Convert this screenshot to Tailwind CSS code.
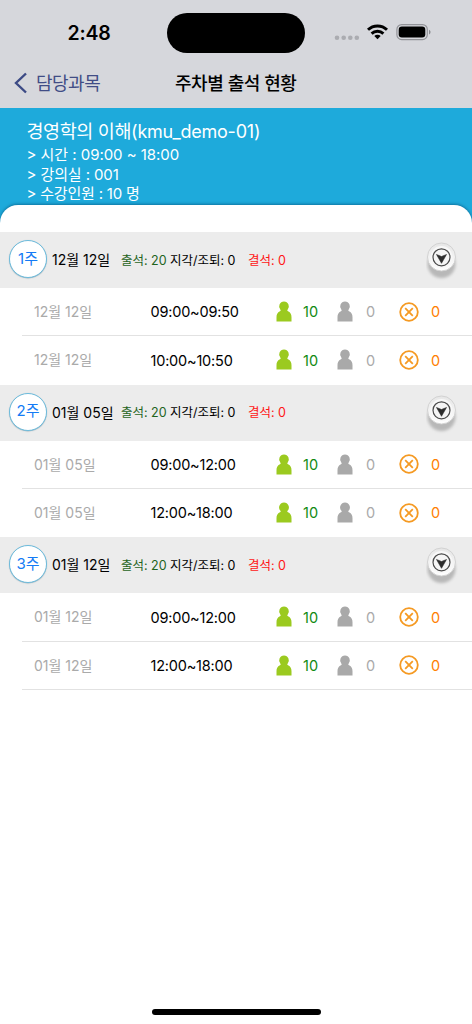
<!DOCTYPE html>
<html lang="ko">
<head>
<meta charset="utf-8">
<title>주차별 출석 현황</title>
<script src="https://cdn.jsdelivr.net/npm/@tailwindcss/browser@4"></script>
</head>
<body class="bg-white">
<svg class="hidden">
  <symbol id="person" viewBox="0 0 16 21"><path d="M8 .5a4.900 4.900 0 0 1 3.600 8.200c-.5.6-.4 1.200.5 1.600 2.500 1 3.400 3.400 3.400 6v4.200H.5v-4.200c0-2.600.9-5 3.400-6 .9-.4 1-1 .5-1.600A4.900 4.900 0 0 1 8 .5z" fill="currentColor"/></symbol>
  <symbol id="cross" viewBox="0 0 20 20"><g fill="none" stroke="currentColor" stroke-width="1.800"><circle cx="10" cy="10" r="8.800"/><path d="M6.200 6.200l7.600 7.600M13.800 6.200l-7.600 7.600"/></g></symbol>
</svg>
<div class="relative flex h-[1024px] w-[472px] flex-col overflow-hidden bg-white font-['Inter','Noto_Sans_CJK_KR',sans-serif] text-black whitespace-nowrap">
  <header class="h-[107.500px] shrink-0 bg-[#d6d7dc]">
    <div class="flex h-[53px] items-start pt-[12.500px]">
      <div class="w-[167px] pl-[67.500px] pt-[5px] text-[19.500px] leading-[30px] font-semibold tracking-[-0.200px]">2:48</div>
      <div class="h-[40.500px] w-[138px] rounded-full bg-black"></div>
      <svg class="ml-[29px] mt-[9px] h-[20px] w-[98px]" viewBox="334 22 98 20">
        <g fill="#abacb1"><circle cx="337" cy="37.800" r="2.300"/><circle cx="343.700" cy="37.800" r="2.300"/><circle cx="350.300" cy="37.800" r="2.300"/><circle cx="356.800" cy="37.800" r="2.300"/></g>
        <g fill="none" stroke="#000" stroke-width="2.900"><path d="M368 29.800a13.600 13.600 0 0 1 19 0"/><path d="M371.600 33.600a8.600 8.600 0 0 1 11.800 0"/></g>
        <path d="M377.500 39.300l-3.200-3.200a4.600 4.600 0 0 1 6.400 0z"/>
        <rect x="396.900" y="24.600" width="30.400" height="15" rx="4.800" fill="none" stroke="#929398" stroke-width="1.200"/>
        <rect x="398.700" y="26.500" width="26.600" height="11" rx="3.200"/>
        <path d="M429 29.800c2 .8 2 3.800 0 4.600z" fill="#8b8c91"/>
      </svg>
    </div>
    <div class="flex h-[54px] items-center pt-[6px]">
      <svg class="ml-[14px] h-[22px] w-[14px]" viewBox="0 0 14 22" fill="none" stroke="#3c4a85" stroke-width="2.400"><path d="M12 1.500L2 11l10 9.500"/></svg>
      <div class="ml-[8px] w-[139px] text-[18px] tracking-[-0.500px] text-[#414d86]">담당과목</div>
      <div class="text-[18px] font-medium tracking-[-0.450px]">주차별 출석 현황</div>
    </div>
  </header>
  <section class="h-[124.500px] shrink-0 bg-[#1eaadb] text-white">
    <div class="h-[97.500px] pl-[26.500px] pt-[9px]">
      <div class="h-[28px] text-[18.500px] leading-[28px]"><span class="tracking-[-0.400px]">경영학의 이해</span><span class="text-[18px] tracking-[-0.220px]">(kmu_demo-01)</span></div>
      <div class="h-[20px] text-[15px] leading-[20px] tracking-[-0.040px]">&gt; 시간 : 09:00 ~ 18:00</div>
      <div class="h-[19.500px] text-[15px] leading-[20px] tracking-[-0.100px]">&gt; 강의실 : 001</div>
      <div class="h-[20px] text-[15px] leading-[20px] tracking-[-0.200px]">&gt; 수강인원 : 10 명</div>
    </div>
    <div class="h-[27px] rounded-t-[18px] bg-white shadow-[0_-1px_3px_0_rgba(0,70,110,0.550)]"></div>
  </section>
  <main id="weeks" class="flex flex-col"></main>
  <div class="absolute top-[1009px] left-[151.500px] h-[6px] w-[169px] rounded-full bg-black"></div>
</div>
<script>
const weeks = [
  ['1주', '12월 12일', ['09:00~09:50', '10:00~10:50']],
  ['2주', '01월 05일', ['09:00~12:00', '12:00~18:00']],
  ['3주', '01월 12일', ['09:00~12:00', '12:00~18:00']],
];
const session = (date, time, last) => `
  <div class="flex h-[48.330px] pl-[22px]">
    <div class="flex w-[450px] items-center border-b ${last ? 'border-transparent' : 'border-[#e2e2e2]'}">
      <div class="w-[117px] pl-[12px] text-[14px] text-[#aaaaaa]">${date}</div>
      <div class="w-[136.500px] pl-[11.500px] pt-[1px] text-[14.500px] tracking-[-0.200px]">${time}</div>
      <svg class="h-[21px] w-[16px] text-[#9bca1f]"><use href="#person"/></svg>
      <div class="w-[45.500px] pl-[11.500px] pt-[1px] text-[14.500px] text-[#118a11]">10</div>
      <svg class="h-[21px] w-[16px] text-[#a9a9a9]"><use href="#person"/></svg>
      <div class="w-[46px] pl-[13px] pt-[1px] text-[14.500px] text-[#aaaaaa]">0</div>
      <svg class="h-[20px] w-[20px] text-[#f59a23]"><use href="#cross"/></svg>
      <div class="pl-[12px] pt-[1px] text-[14.500px] text-[#ff8000]">0</div>
    </div>
  </div>`;
document.getElementById('weeks').innerHTML = weeks.map(([n, date, times], i) => `
  <section>
    <div class="flex h-[56px] items-center bg-[#ececec] pl-[9px]">
      <div class="mb-[2px] flex h-[38px] w-[38px] items-center justify-center rounded-full border border-[#6cbbdc] bg-white text-[15px] text-[#147bf5] shadow-[0_0.500px_1px_#9eb4be]">${n}</div>
      <div class="w-[74px] pl-[5px] pb-[1px] text-[14px]">${date}</div>
      <div class="w-[49px] pt-[2px] text-[12.500px] text-[#1f641c]">출석: 20</div>
      <div class="w-[78px] pt-[2px] text-[12.500px]">지각/조퇴: 0</div>
      <div class="w-[177.500px] pt-[2px] text-[12.500px] text-[#ff1515]">결석: 0</div>
      <svg class="h-[42px] w-[32px]" viewBox="0 0 32 42">
        <defs><filter id="blur${i}" x="-20%" y="-20%" width="140%" height="140%"><feGaussianBlur stdDeviation="1.500"/></filter>
        <linearGradient id="btn${i}" x2="0" y2="1"><stop stop-color="#e6e6e6"/><stop offset="1" stop-color="#ffffff"/></linearGradient></defs>
        <circle cx="15.500" cy="25" r="14" fill="#b8b8b8" filter="url(#blur${i})"/>
        <circle cx="15.500" cy="18" r="14" fill="url(#btn${i})" stroke="#d2d2d2"/>
        <circle cx="15.500" cy="18" r="11" fill="#f8f8f8"/>
        <circle cx="15.500" cy="18.300" r="8.500" fill="#f5f5f5" stroke="#4a4a4a" stroke-width="1.200"/>
        <path d="M10.500 15.500l5 2 5-2-5 8.800z" fill="#2c2c2c" stroke="#2c2c2c" stroke-width=".6"/>
      </svg>
    </div>
    ${session(date, times[0], false)}${session(date, times[1], i < 2)}
  </section>`).join('');
</script>
</body>
</html>
